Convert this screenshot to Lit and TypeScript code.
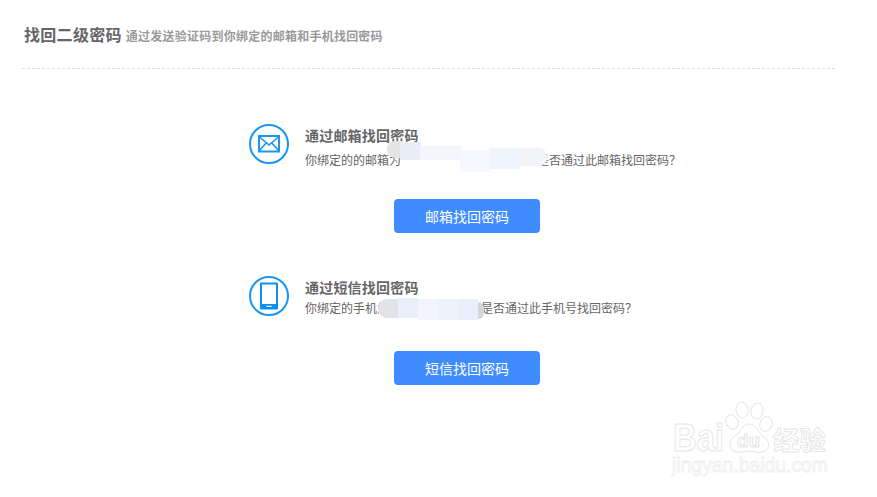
import { LitElement, html, css, svg } from "lit";
import { customElement } from "lit/decorators.js";

type Tile = [number, number, number, number, string, string?];

const smudgeA: Tile[] = [
  [0, 1, 16, 17, "#e4e4e4", "8px 0 0 8px"],
  [13, 2, 21, 18, "#e8edf8"],
  [33, 6, 41, 14, "#f3f6fd"],
  [73, 10, 30, 22, "#f5f8fe"],
  [103, 8, 30, 21, "#f0f5fd"],
  [133, 8, 27, 18, "#f3f4f8", "0 8px 8px 0"],
];
const smudgeB: Tile[] = [
  [0, 1, 20, 19, "#e1e3e7", "9px 0 0 9px"],
  [20, 0, 20, 20, "#e8eefa"],
  [40, 1, 20, 21, "#f2f5fc"],
  [60, 1, 20, 21, "#eef2fb"],
  [80, 1, 20, 21, "#e9effb"],
  [100, 4, 6, 17, "#d6d6d6", "0 6px 6px 0"],
];

const mailIcon = svg`
  <circle cx="20" cy="20" r="19" fill="none" stroke="#1a96f5" stroke-width="2"/>
  <rect x="10" y="12" width="20" height="15.5" fill="none" stroke="#1a96f5" stroke-width="2"/>
  <path d="M10 12.5 20 21l10-8.500M10 27l7.200-8M30 27l-7.200-8" fill="none" stroke="#1a96f5" stroke-width="1.600"/>`;

const phoneIcon = svg`
  <circle cx="20" cy="20" r="19" fill="none" stroke="#1a96f5" stroke-width="2"/>
  <path fill-rule="evenodd" fill="#0d8ff2" d="M11 7.500a1 1 0 0 1 1-1h16a1 1 0 0 1 1 1v25a1 1 0 0 1-1 1H12a1 1 0 0 1-1-1zM13 8.500v19.500h14V8.500zM17.500 29.800v1.300h5v-1.300z"/>`;

@customElement("app-root")
export class AppRoot extends LitElement {
  static styles = css`
    :host {
      display: block;
      position: relative;
      width: 877px;
      height: 497px;
      background: #fff;
      overflow: hidden;
      font-family: "Noto Sans CJK SC", "Liberation Sans", sans-serif;
      color: #666;
    }
    .page-head {
      width: 813px;
      margin-left: 22px;
      height: 69px;
      box-sizing: border-box;
      border-bottom: 1px dashed #dedede;
      padding: 23px 0 0 2px;
      display: flex;
      align-items: baseline;
      gap: 4px;
    }
    .page-title {
      margin: 0;
      font-size: 16px;
      line-height: 22px;
      font-weight: 700;
      color: #666;
      letter-spacing: 0.3px;
    }
    .page-sub {
      font-size: 12px;
      line-height: 22px;
      font-weight: 700;
      color: #9a9a9a;
      letter-spacing: 0.24px;
    }
    .methods {
      margin-left: 249px;
      padding-top: 55px;
      display: flex;
      flex-direction: column;
      gap: 43px;
    }
    .method { display: flex; flex-direction: column; }
    .info { display: flex; gap: 16px; align-items: flex-start; }
    .icon { width: 40px; height: 40px; flex: none; display: block; }
    .text { padding-top: 1px; }
    .heading {
      margin: 0;
      font-size: 14px;
      line-height: 21px;
      font-weight: 700;
      color: #666;
      letter-spacing: 0.2px;
    }
    .desc {
      margin: 0;
      font-size: 12px;
      line-height: 18px;
      white-space: nowrap;
      color: #666;
      display: flex;
      position: relative;
    }
    .mask { display: block; flex: none; position: relative; height: 18px; }
    .tile { position: absolute; filter: blur(0.6px); }
    .btn {
      width: 146px;
      height: 34px;
      margin: 0 0 0 145px;
      border: 0;
      border-radius: 4px;
      background: #3f8cff;
      color: #fff;
      font: inherit;
      font-size: 14px;
      padding: 0;
      display: block;
    }
    .watermark { position: absolute; left: 660px; top: 395px; }
    .wm-text {
      font-family: "Liberation Sans", sans-serif;
      fill: #fff;
      stroke: #e6e6e6;
      stroke-width: 1;
    }
    .wm-cjk {
      font-family: "Noto Sans CJK SC", sans-serif;
      font-weight: 700;
      font-size: 26px;
      fill: #fff;
      stroke: #e6e6e6;
      stroke-width: 0.900;
    }
    .wm-url {
      font-family: "Liberation Sans", sans-serif;
      font-size: 20px;
      fill: #fff;
      stroke: #eeeeee;
      stroke-width: 0.800;
    }
  `;

  private tiles(list: Tile[], left: number, top: number) {
    return list.map(
      ([x, y, w, h, c, r]) => html`<i
        class="tile"
        style="left:${x + left}px;top:${y + top}px;width:${w}px;height:${h}px;background:${c};border-radius:${r ?? "0"}"
      ></i>`
    );
  }

  private method(
    icon: unknown,
    title: string,
    before: string,
    after: string,
    maskWidth: number,
    tiles: Tile[],
    tx: number,
    ty: number,
    action: string,
    descGap: number,
    btnGap: number
  ) {
    return html`<section class="method">
      <div class="info">
        <svg class="icon" viewBox="0 0 40 40">${icon}</svg>
        <div class="text">
          <h2 class="heading">${title}</h2>
          <p class="desc" style="margin-top:${descGap}px">
            ${before}<span class="mask" style="width:${maskWidth}px">${this.tiles(tiles, tx, ty)}</span>${after}
          </p>
        </div>
      </div>
      <button class="btn" style="margin-top:${btnGap}px">${action}</button>
    </section>`;
  }

  render() {
    return html`
      <header class="page-head">
        <h1 class="page-title">找回二级密码</h1>
        <span class="page-sub">通过发送验证码到你绑定的邮箱和手机找回密码</span>
      </header>
      <main class="methods">
        ${this.method(mailIcon, "通过邮箱找回密码", "你绑定的的邮箱为", "是否通过此邮箱找回密码？", 136, smudgeA, -14, -11, "邮箱找回密码", 5, 30)}
        ${this.method(phoneIcon, "通过短信找回密码", "你绑定的手机为", "是否通过此手机号找回密码？", 92, smudgeB, -11, -1, "短信找回密码", 1, 34)}
      </main>
      <svg class="watermark" width="180" height="90" viewBox="0 0 180 90">
        <g fill="#fff" stroke="#e6e6e6" stroke-width="1">
          <ellipse cx="72" cy="27" rx="6" ry="7.500" transform="rotate(-25 72 27)"/>
          <ellipse cx="82" cy="15" rx="6" ry="8" transform="rotate(-10 82 15)"/>
          <ellipse cx="97" cy="16" rx="6" ry="8" transform="rotate(10 97 16)"/>
          <ellipse cx="106" cy="29" rx="6" ry="7.500" transform="rotate(25 106 29)"/>
          <path d="M76 57c-8-1-8-12-1-16 7-4 7-12 14-12s8 8 14 12c8 5 7 15-1 16-5 1-9-1-13-1s-8 2-13 1z"/>
        </g>
        <text class="wm-text" x="13" y="56" font-size="39" font-weight="700" textLength="51" lengthAdjust="spacingAndGlyphs">Bai</text>
        <text class="wm-text" x="77" y="52" font-size="18" font-weight="700" textLength="23" lengthAdjust="spacingAndGlyphs">du</text>
        <text class="wm-cjk" x="113" y="55" textLength="53" lengthAdjust="spacingAndGlyphs">经验</text>
        <text class="wm-url" x="12" y="77" textLength="156" lengthAdjust="spacingAndGlyphs">jingyan.baidu.com</text>
      </svg>
    `;
  }
}
